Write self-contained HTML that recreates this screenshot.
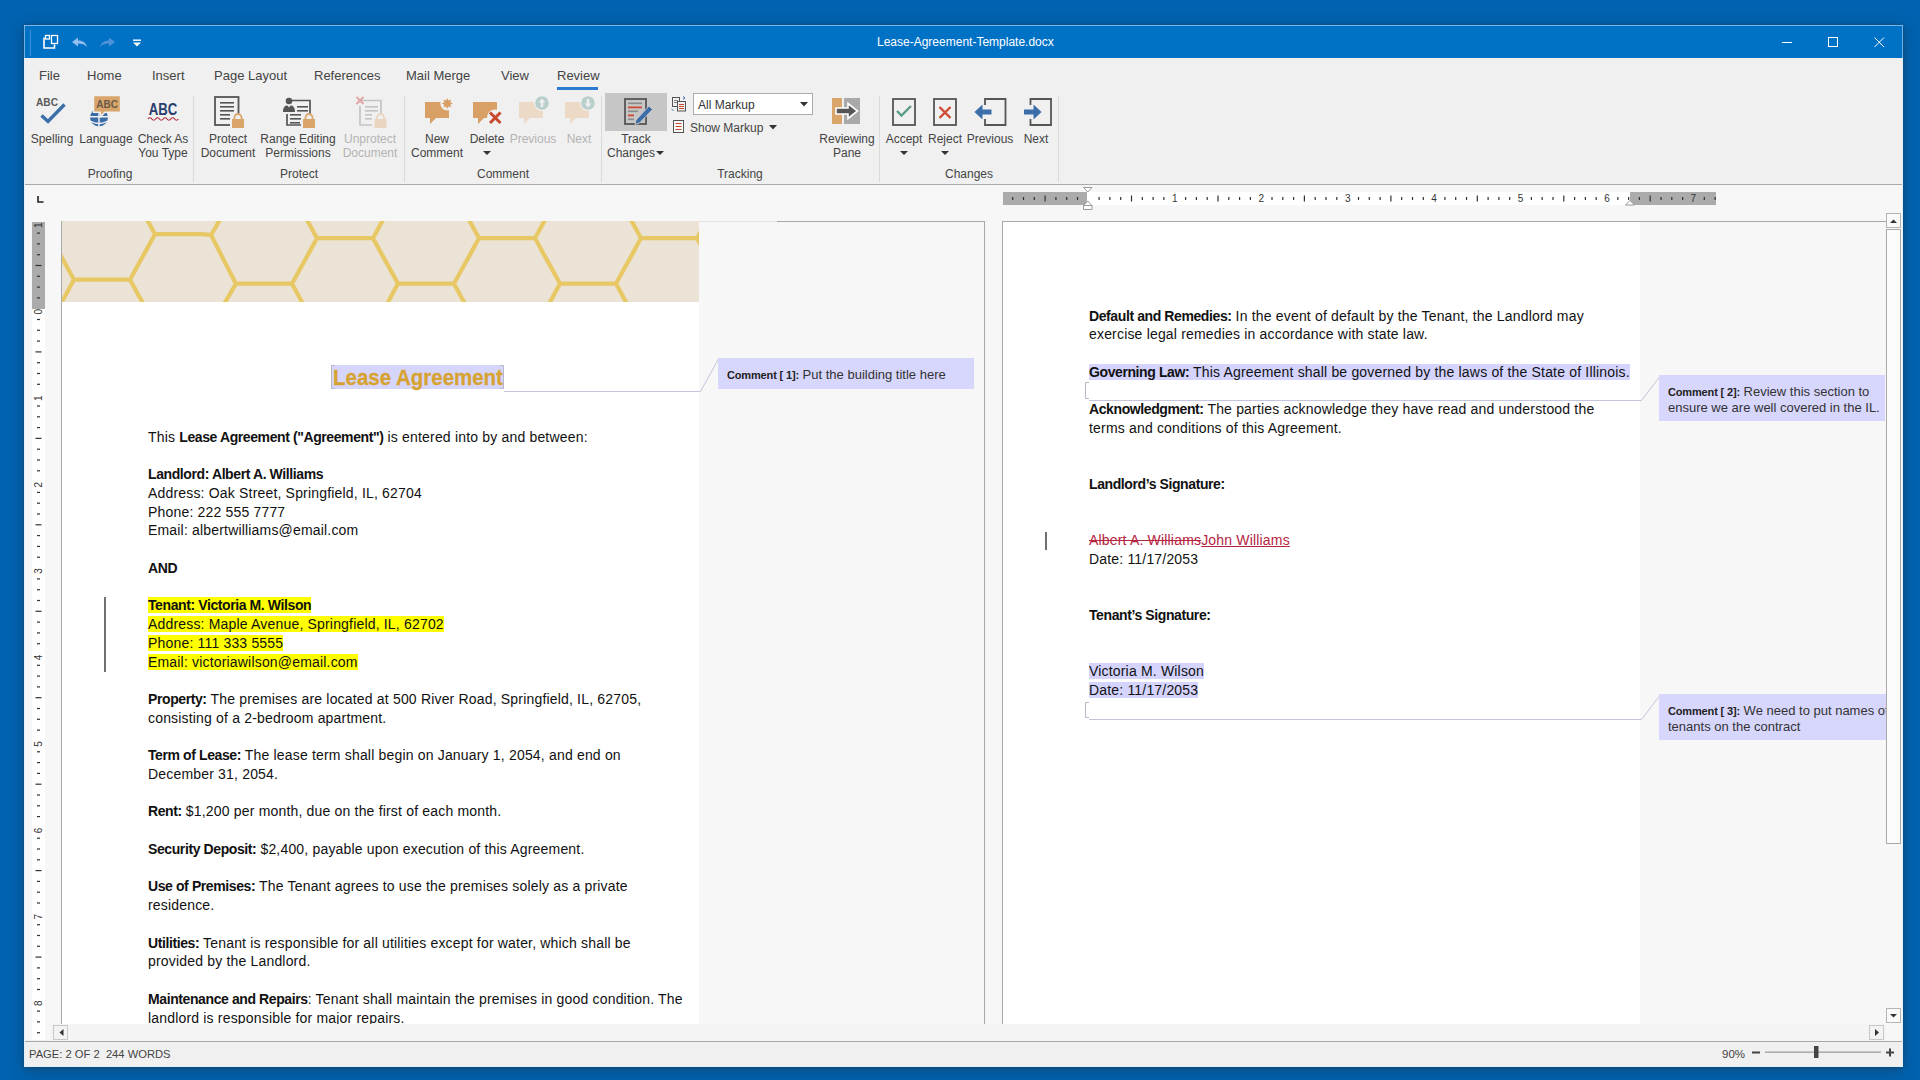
<!DOCTYPE html>
<html><head><meta charset="utf-8">
<style>
*{margin:0;padding:0;box-sizing:border-box}
html,body{width:1920px;height:1080px;overflow:hidden}
body{background:#0062b0;font-family:"Liberation Sans",sans-serif;position:relative}
.a{position:absolute}
.tab{position:absolute;top:68px;font-size:13px;color:#444;white-space:nowrap}
.rl{position:absolute;font-size:12px;color:#444;white-space:nowrap;text-align:center;line-height:14px}
.rl.dis{color:#b4b4b4}
.gl{position:absolute;top:167px;font-size:12px;color:#444;white-space:nowrap;text-align:center}
.sep{position:absolute;top:96px;width:1px;height:86px;background:#dadada}
.doc{position:absolute;font-size:14px;color:#111;line-height:19px;white-space:nowrap;letter-spacing:0.18px}
.doc b{letter-spacing:-0.4px}
.hl{background:#ffff00}
.sel{background:#d4d4fe}
.cm{position:absolute;background:#d7d6fd;font-size:13px;color:#333;line-height:16px}
.cm b{font-size:11px;font-weight:bold;color:#222;letter-spacing:-0.15px}
</style></head>
<body>
<!-- window frame -->
<div class="a" style="left:24px;top:25px;width:1879px;height:1042px;background:#f0f0f0;border:1px solid #e2eef8;border-top-color:#7db5e6;box-shadow:0 4px 14px rgba(40,40,40,0.35),0 0 3px rgba(50,50,50,0.45)"></div>
<!-- title bar -->
<div class="a" style="left:25px;top:26px;width:1877px;height:32px;background:#0072c6"></div>
<div class="a" style="left:24px;top:26px;width:1px;height:32px;background:#6fb0e6"></div>
<div class="a" style="left:1902px;top:26px;width:1px;height:32px;background:#6fb0e6"></div>
<div class="a" style="left:877px;top:35px;font-size:12px;color:#fff;white-space:nowrap">Lease-Agreement-Template.docx</div>

<!-- tabs -->
<div class="tab" style="left:39px">File</div>
<div class="tab" style="left:87px">Home</div>
<div class="tab" style="left:152px">Insert</div>
<div class="tab" style="left:214px">Page Layout</div>
<div class="tab" style="left:314px">References</div>
<div class="tab" style="left:406px">Mail Merge</div>
<div class="tab" style="left:501px">View</div>
<div class="tab" style="left:557px">Review</div>
<div class="a" style="left:557px;top:87px;width:41px;height:3px;background:#2b79d0"></div>


<!-- title icons -->
<svg class="a" style="left:0;top:0" width="1920" height="200" viewBox="0 0 1920 200">
 <g fill="none" stroke="#fff">
  <line x1="30.5" y1="30" x2="30.5" y2="56" stroke="#3d8fdc" stroke-width="1"/>
  <!-- quick access icon -->
  <path d="M44 37.5 V48 H54.5 V44.5" stroke-width="1.6"/>
  <rect x="45.5" y="35.5" width="4" height="3.5" stroke-width="1.3"/>
  <rect x="51.5" y="35.5" width="6" height="8" stroke-width="1.3"/>
 </g>
 <!-- undo -->
 <path d="M72 42 L78 37.5 V40.5 C83 40.5 86 43 87 47 C85 44.5 82 43.5 78 43.5 V46.5 Z" fill="#94bdf0"/>
 <!-- redo -->
 <path d="M115 42 L109 37.5 V40.5 C104 40.5 101 43 100 47 C102 44.5 105 43.5 109 43.5 V46.5 Z" fill="#4e93da"/>
 <!-- customize -->
 <rect x="133" y="39.5" width="8" height="1.4" fill="#fff"/>
 <path d="M133 42.5 H141 L137 46.5 Z" fill="#fff"/>
 <!-- window controls -->
 <g stroke="#fff" stroke-width="1" fill="none">
  <line x1="1782" y1="42.5" x2="1792" y2="42.5"/>
  <rect x="1828.5" y="37.5" width="9" height="9"/>
  <line x1="1874.5" y1="37.5" x2="1884" y2="47"/>
  <line x1="1884" y1="37.5" x2="1874.5" y2="47"/>
 </g>

 <!-- separators -->
 <g fill="#dadada">
  <rect x="193" y="96" width="1" height="86"/>
  <rect x="404" y="96" width="1" height="86"/>
  <rect x="601" y="96" width="1" height="86"/>
  <rect x="879" y="96" width="1" height="86"/>
  <rect x="1058" y="96" width="1" height="86"/>
 </g>

 <!-- Spelling -->
 <text x="36" y="106" font-family="Liberation Sans" font-weight="bold" font-size="11" fill="#595959" textLength="22" lengthAdjust="spacingAndGlyphs">ABC</text>
 <path d="M41.5 115.5 L48 121.5 L64.5 104.5" fill="none" stroke="#3b6ea8" stroke-width="3.4" stroke-linejoin="miter"/>

 <!-- Language -->
 <circle cx="99" cy="117.5" r="9" fill="#3b6ea8"/>
 <path d="M99 108 V127 M89 116.8 H109" stroke="#f0f0f0" stroke-width="1.5"/>
 <path d="M90 121 Q99 126 108 121" stroke="#f0f0f0" stroke-width="1.4" fill="none"/>
 <path d="M93.5 95.5 H120.5 V112.3 H104.8 L101 116.5 L100.2 112.3 H93.5 Z" fill="#d9a56b" stroke="#f0f0f0" stroke-width="1.4"/>
 <text x="96.3" y="107.8" font-family="Liberation Sans" font-weight="bold" font-size="10.8" fill="#6a5947" textLength="21.7" lengthAdjust="spacingAndGlyphs">ABC</text>
 <!-- Check as you type -->
 <text x="148.8" y="114.8" font-family="Liberation Sans" font-weight="bold" font-size="16.5" fill="#2b3d6c" textLength="28.5" lengthAdjust="spacingAndGlyphs">ABC</text>
 <path d="M148 119 q1.9 -2.5 3.8 0 t3.8 0 t3.8 0 t3.8 0 t3.8 0 t3.8 0 t3.8 0 t3.8 0" fill="none" stroke="#b02a3c" stroke-width="1.2"/>

 <!-- Protect document -->
 <rect x="215" y="97" width="23.5" height="28" fill="none" stroke="#555" stroke-width="1.8"/>
 <g fill="#555"><rect x="220" y="102" width="14" height="1.6"/><rect x="220" y="106" width="14" height="1.6"/><rect x="220" y="110" width="14" height="1.6"/><rect x="220" y="114" width="11" height="1.6"/><rect x="220" y="118" width="11" height="1.6"/></g>
 <rect x="230" y="114" width="14" height="14" fill="#f0f0f0"/>
 <path d="M234.5 119.5 V117.5 a3.5 3.5 0 0 1 7 0 V119.5" fill="none" stroke="#d9a56b" stroke-width="1.8"/>
 <rect x="232" y="119" width="12" height="9" fill="#d9a56b"/>

 <!-- Range editing permissions -->
 <circle cx="289" cy="101" r="3.3" fill="#555"/>
 <path d="M283 112 C283 107 285 105.5 287.5 105.5 L289 107.5 L290.5 105.5 C293 105.5 295 107 295 112 Z" fill="#555"/>
 <path d="M292 100.5 H310 V121" fill="none" stroke="#555" stroke-width="1.7"/>
 <path d="M287 114 V125 H301" fill="none" stroke="#555" stroke-width="1.7"/>
 <g fill="#555"><rect x="297" y="106" width="11" height="1.6"/><rect x="297" y="110" width="11" height="1.6"/><rect x="290" y="114" width="16" height="1.6"/><rect x="290" y="118" width="12" height="1.6"/><rect x="290" y="122" width="10" height="1.6"/></g>
 <rect x="301" y="114" width="14" height="14" fill="#f0f0f0"/>
 <path d="M305.5 119.5 V117.5 a3.5 3.5 0 0 1 7 0 V119.5" fill="none" stroke="#d9a56b" stroke-width="1.8"/>
 <rect x="303" y="119" width="12" height="9" fill="#d9a56b"/>

 <!-- Unprotect document (disabled) -->
 <path d="M360 100.5 H381 V121" fill="none" stroke="#c4c4c4" stroke-width="1.7"/>
 <path d="M360 106 V125 H373" fill="none" stroke="#c4c4c4" stroke-width="1.7"/>
 <g fill="#c4c4c4"><rect x="365" y="106" width="13" height="1.6"/><rect x="365" y="110" width="13" height="1.6"/><rect x="365" y="114" width="11" height="1.6"/><rect x="365" y="118" width="9" height="1.6"/></g>
 <path d="M356.5 97 L363.5 104 M363.5 97 L356.5 104" stroke="#e4a3a3" stroke-width="1.8"/>
 <rect x="372" y="114" width="14" height="14" fill="#f0f0f0"/>
 <path d="M377 119.5 V117.5 a3.5 3.5 0 0 1 7 0 V119.5" fill="none" stroke="#ead6c0" stroke-width="1.8"/>
 <rect x="374.5" y="119" width="12" height="9" fill="#ead6c0"/>

 <!-- New comment -->
 <path d="M425 102 H449 V118 H436 L430 124 V118 H425 Z" fill="#d9a065"/>
 <circle cx="447.3" cy="103.5" r="7" fill="#f0f0f0"/>
 <path d="M447.30,97.90 L448.52,100.54 L451.26,99.54 L450.26,102.28 L452.90,103.50 L450.26,104.72 L451.26,107.46 L448.52,106.46 L447.30,109.10 L446.08,106.46 L443.34,107.46 L444.34,104.72 L441.70,103.50 L444.34,102.28 L443.34,99.54 L446.08,100.54 Z" fill="#d9a065"/>

 <!-- Delete -->
 <path d="M473 102 H497 V118 H484 L478 124 V118 H473 Z" fill="#d9a065"/>
 <circle cx="495" cy="117.5" r="8" fill="#f0f0f0"/>
 <path d="M490 112.5 L500.5 123 M500.5 112.5 L490 123" stroke="#c9492e" stroke-width="3"/>

 <!-- Previous (disabled) -->
 <path d="M519 102 H543 V118 H530 L524 124 V118 H519 Z" fill="#ecdac6"/>
 <circle cx="542" cy="103" r="8" fill="#f0f0f0"/>
 <circle cx="542" cy="103" r="6.8" fill="#b9cfcb"/>
 <path d="M542 98.5 L545.5 102.5 H543.2 V107 H540.8 V102.5 H538.5 Z" fill="#f0f0f0"/>
 <!-- Next (disabled) -->
 <path d="M565 102 H589 V118 H576 L570 124 V118 H565 Z" fill="#ecdac6"/>
 <circle cx="588" cy="103" r="8" fill="#f0f0f0"/>
 <circle cx="588" cy="103" r="6.8" fill="#b9cfcb"/>
 <path d="M588 107.5 L591.5 103.5 H589.2 V99 H586.8 V103.5 H584.5 Z" fill="#f0f0f0"/>

 <!-- Track changes (pressed) -->
 <rect x="605" y="93" width="62" height="38" fill="#c6c6c6"/>
 <rect x="625" y="99" width="21" height="25" fill="#c6c6c6" stroke="#555" stroke-width="1.8"/>
 <g><rect x="628" y="102.5" width="14" height="1.6" fill="#8a8a8a"/><rect x="628" y="106.5" width="14" height="1.8" fill="#d04a34"/><rect x="628" y="110.5" width="10" height="1.6" fill="#8a8a8a"/><rect x="628" y="114.5" width="6" height="1.8" fill="#d04a34"/><rect x="628" y="118.5" width="6" height="1.6" fill="#8a8a8a"/></g>
 <path d="M636 120 L649 106 L652.5 109.5 L639.5 123 L635 124.5 Z" fill="#3b6ea8" stroke="#c6c6c6" stroke-width="1"/>

 <!-- compare small icon -->
 <g fill="none" stroke="#555" stroke-width="1">
  <rect x="672.5" y="97.5" width="7" height="9" fill="#f0f0f0"/>
  <rect x="677.5" y="101.5" width="8" height="9.5" fill="#f0f0f0"/>
 </g>
 <g fill="#c9492e"><rect x="679" y="104" width="5" height="1"/><rect x="679" y="106" width="5" height="1"/><rect x="679" y="108" width="5" height="1"/></g>
 <g fill="#888"><rect x="674" y="100" width="4" height="1"/><rect x="674" y="102" width="3" height="1"/></g>
 <path d="M683 96.5 l2 1.5 l-2 1.5 M671.5 109 l2 1.5" fill="none" stroke="#3b6ea8" stroke-width="1"/>
 <!-- combobox -->
 <rect x="693.5" y="93.5" width="119" height="21" fill="#fff" stroke="#ababab"/>
 <path d="M800 102 H808 L804 106.5 Z" fill="#333"/>
 <!-- show markup icon -->
 <rect x="673.5" y="120.5" width="10" height="12" fill="#f9f9f9" stroke="#555"/>
 <g fill="#c9492e"><rect x="675.5" y="123" width="6" height="1"/><rect x="675.5" y="126" width="6" height="1"/><rect x="675.5" y="129" width="6" height="1"/></g>
 <path d="M769 125 H777 L773 129.5 Z" fill="#333"/>

 <!-- Reviewing pane -->
 <rect x="832" y="98" width="10" height="26" fill="#d9a56b"/>
 <rect x="844" y="98" width="16" height="26" fill="#a9a9a9"/>
 <path d="M836 108 H848 V103.5 L857.5 111 L848 118.5 V114 H836 Z" fill="#555" stroke="#fff" stroke-width="1.6" stroke-linejoin="miter"/>

 <!-- Accept -->
 <rect x="893" y="99" width="22" height="26" fill="none" stroke="#555" stroke-width="1.8"/>
 <path d="M897 111 L901.5 115.5 L911 106" fill="none" stroke="#5e9c84" stroke-width="2.4"/>
 <!-- Reject -->
 <rect x="934" y="99" width="22" height="26" fill="none" stroke="#555" stroke-width="1.8"/>
 <path d="M939.5 107 L950.5 118 M950.5 107 L939.5 118" stroke="#cf4a33" stroke-width="2.4"/>
 <!-- Previous -->
 <path d="M985 105 V99 H1005.5 V125 H985 V119" fill="none" stroke="#555" stroke-width="1.8"/>
 <path d="M974.5 112 L982.5 104.5 V109.5 H991.5 V114.5 H982.5 V119.5 Z" fill="#3b6ea8"/>
 <!-- Next -->
 <path d="M1030.5 105 V99 H1051 V125 H1030.5 V119" fill="none" stroke="#555" stroke-width="1.8"/>
 <path d="M1041.5 112 L1033.5 104.5 V109.5 H1024 V114.5 H1033.5 V119.5 Z" fill="#3b6ea8"/>
 <!-- dropdown arrows -->
 <g fill="#333">
  <path d="M483 151 H491 L487 155 Z"/>
  <path d="M656 151 H664 L660 155 Z"/>
  <path d="M900 151 H908 L904 155 Z"/>
  <path d="M941 151 H949 L945 155 Z"/>
 </g>
</svg>

<!-- ribbon labels -->
<div class="rl" style="left:22px;top:132px;width:60px">Spelling</div>
<div class="rl" style="left:76px;top:132px;width:60px">Language</div>
<div class="rl" style="left:128px;top:132px;width:70px">Check As<br>You Type</div>
<div class="gl" style="left:60px;width:100px">Proofing</div>
<div class="rl" style="left:193px;top:132px;width:70px">Protect<br>Document</div>
<div class="rl" style="left:253px;top:132px;width:90px">Range Editing<br>Permissions</div>
<div class="rl dis" style="left:330px;top:132px;width:80px">Unprotect<br>Document</div>
<div class="gl" style="left:249px;width:100px">Protect</div>
<div class="rl" style="left:402px;top:132px;width:70px">New<br>Comment</div>
<div class="rl" style="left:457px;top:132px;width:60px">Delete</div>
<div class="rl dis" style="left:503px;top:132px;width:60px">Previous</div>
<div class="rl dis" style="left:549px;top:132px;width:60px">Next</div>
<div class="gl" style="left:453px;width:100px">Comment</div>
<div class="rl" style="left:601px;top:132px;width:70px">Track<br><span style="margin-right:10px">Changes</span></div>
<div class="a" style="left:698px;top:98px;font-size:12px;color:#333;white-space:nowrap">All Markup</div>
<div class="a" style="left:690px;top:121px;font-size:12px;color:#444;white-space:nowrap">Show Markup</div>
<div class="gl" style="left:690px;width:100px">Tracking</div>
<div class="rl" style="left:807px;top:132px;width:80px">Reviewing<br>Pane</div>
<div class="rl" style="left:874px;top:132px;width:60px">Accept</div>
<div class="rl" style="left:915px;top:132px;width:60px">Reject</div>
<div class="rl" style="left:955px;top:132px;width:70px">Previous</div>
<div class="rl" style="left:1006px;top:132px;width:60px">Next</div>
<div class="gl" style="left:919px;width:100px">Changes</div>

<div class="a" style="left:25px;top:184px;width:1877px;height:1px;background:#a9a9a9"></div>
<div class="a" style="left:25px;top:185px;width:1877px;height:855px;background:#f7f7f7"></div>
<div class="a" style="left:61px;top:221px;width:924px;height:820px;border:1px solid #a8a8a8;border-bottom:none;background:#f7f7f7"></div>
<div class="a" style="left:62px;top:222px;width:637px;height:802px;background:#fff"></div>
<div class="a" style="left:699px;top:221px;width:78px;height:1px;background:#e4e4e4"></div>
<div class="a" style="left:1002px;top:221px;width:900px;height:820px;border:1px solid #a8a8a8;border-bottom:none;border-right:none;background:#f7f7f7"></div>
<div class="a" style="left:1003px;top:222px;width:637px;height:802px;background:#fff"></div>
<svg class="a" style="left:0;top:0" width="1920" height="400"><defs><clipPath id="hc"><rect x="62" y="221" width="637" height="81"/></clipPath></defs><rect x="62" y="221" width="637" height="81" fill="#ebe3d5"/><path clip-path="url(#hc)" d="M-250.0,279.7 L-240.7,279.7 L-231.3,279.7 L-222.0,279.7 L-212.7,279.7 L-203.3,279.7 L-194.0,279.7 M-194.0,279.7 L-189.8,272.1 L-185.7,264.5 L-181.5,256.9 L-177.3,249.4 L-173.2,241.8 L-169.0,234.2 M-194.0,279.7 L-189.8,287.3 L-185.7,294.9 L-181.5,302.4 L-177.3,310.0 L-173.2,317.6 L-169.0,325.2 M-169.0,234.2 L-159.7,234.2 L-150.3,234.2 L-141.0,234.2 L-131.7,234.2 L-122.3,234.2 L-113.0,234.2 M-113.0,234.2 L-108.8,241.8 L-104.7,249.4 L-100.5,256.9 L-96.3,264.5 L-92.2,272.1 L-88.0,279.7 M-113.0,234.2 L-108.8,226.6 L-104.7,219.0 L-100.5,211.4 L-96.3,203.9 L-92.2,196.3 L-88.0,188.7 M-169.0,234.2 L-173.2,226.6 L-177.3,219.0 L-181.5,211.4 L-185.7,203.9 L-189.8,196.3 L-194.0,188.7 M-250.0,279.7 L-254.2,287.3 L-258.3,294.9 L-262.5,302.4 L-266.7,310.0 L-270.8,317.6 L-275.0,325.2 M-88.0,279.7 L-78.7,279.7 L-69.3,279.7 L-60.0,279.7 L-50.7,279.7 L-41.3,279.7 L-32.0,279.7 M-32.0,279.7 L-27.8,272.1 L-23.7,264.5 L-19.5,256.9 L-15.3,249.4 L-11.2,241.8 L-7.0,234.2 M-32.0,279.7 L-27.8,287.3 L-23.7,294.9 L-19.5,302.4 L-15.3,310.0 L-11.2,317.6 L-7.0,325.2 M-7.0,234.2 L2.3,234.2 L11.7,234.2 L21.0,234.2 L30.3,234.2 L39.7,234.2 L49.0,234.2 M49.0,234.2 L53.2,241.8 L57.3,249.4 L61.5,256.9 L65.7,264.5 L69.8,272.1 L74.0,279.7 M49.0,234.2 L53.2,226.6 L57.3,219.0 L61.5,211.4 L65.7,203.9 L69.8,196.3 L74.0,188.7 M-7.0,234.2 L-11.2,226.6 L-15.3,219.0 L-19.5,211.4 L-23.7,203.9 L-27.8,196.3 L-32.0,188.7 M-88.0,279.7 L-92.2,287.3 L-96.3,294.9 L-100.5,302.4 L-104.7,310.0 L-108.8,317.6 L-113.0,325.2 M74.0,279.7 L83.3,279.7 L92.7,279.7 L102.0,279.7 L111.3,279.7 L120.7,279.7 L130.0,279.7 M130.0,279.7 L134.2,272.1 L138.3,264.5 L142.5,256.9 L146.7,249.4 L150.8,241.8 L155.0,234.2 M130.0,279.7 L134.2,287.3 L138.3,294.9 L142.5,302.4 L146.7,310.0 L150.8,317.6 L155.0,325.2 M155.0,234.2 L164.3,234.2 L173.7,234.2 L183.0,234.2 L192.3,234.2 L201.7,234.2 L211.0,235.0 M211.0,235.0 L215.2,243.1 L219.3,251.3 L223.5,259.4 L227.7,267.6 L231.8,275.7 L236.0,283.7 M211.0,235.0 L215.2,228.0 L219.3,220.9 L223.5,213.9 L227.7,206.9 L231.8,199.9 L236.0,192.7 M155.0,234.2 L150.8,226.6 L146.7,219.0 L142.5,211.4 L138.3,203.9 L134.2,196.3 L130.0,188.7 M74.0,279.7 L69.8,287.3 L65.7,294.9 L61.5,302.4 L57.3,310.0 L53.2,317.6 L49.0,325.2 M236.0,283.7 L245.3,283.7 L254.7,283.7 L264.0,283.7 L273.3,283.7 L282.7,283.7 L292.0,283.7 M292.0,283.7 L296.2,276.1 L300.3,268.5 L304.5,260.9 L308.7,253.4 L312.8,245.8 L317.0,238.2 M292.0,283.7 L296.2,291.3 L300.3,298.9 L304.5,306.4 L308.7,314.0 L312.8,321.6 L317.0,329.2 M317.0,238.2 L326.3,238.2 L335.7,238.2 L345.0,238.2 L354.3,238.2 L363.7,238.2 L373.0,238.2 M373.0,238.2 L377.2,245.8 L381.3,253.4 L385.5,260.9 L389.7,268.5 L393.8,276.1 L398.0,283.7 M373.0,238.2 L377.2,230.6 L381.3,223.0 L385.5,215.4 L389.7,207.9 L393.8,200.3 L398.0,192.7 M317.0,238.2 L312.8,230.6 L308.7,223.0 L304.5,215.4 L300.3,207.9 L296.2,200.3 L292.0,192.7 M236.0,283.7 L231.8,290.9 L227.7,297.9 L223.5,304.9 L219.3,311.9 L215.2,319.0 L211.0,326.0 M398.0,283.7 L407.3,283.7 L416.7,283.7 L426.0,283.7 L435.3,283.7 L444.7,283.7 L454.0,283.7 M454.0,283.7 L458.2,276.1 L462.3,268.5 L466.5,260.9 L470.7,253.4 L474.8,245.8 L479.0,238.2 M454.0,283.7 L458.2,291.3 L462.3,298.9 L466.5,306.4 L470.7,314.0 L474.8,321.6 L479.0,329.2 M479.0,238.2 L488.3,238.2 L497.7,238.2 L507.0,238.2 L516.3,238.2 L525.7,238.2 L535.0,238.2 M535.0,238.2 L539.2,245.8 L543.3,253.4 L547.5,260.9 L551.7,268.5 L555.8,276.1 L560.0,283.7 M535.0,238.2 L539.2,230.6 L543.3,223.0 L547.5,215.4 L551.7,207.9 L555.8,200.3 L560.0,192.7 M479.0,238.2 L474.8,230.6 L470.7,223.0 L466.5,215.4 L462.3,207.9 L458.2,200.3 L454.0,192.7 M398.0,283.7 L393.8,291.3 L389.7,298.9 L385.5,306.4 L381.3,314.0 L377.2,321.6 L373.0,329.2 M560.0,283.7 L569.3,283.7 L578.7,283.7 L588.0,283.7 L597.3,283.7 L606.7,283.7 L616.0,283.7 M616.0,283.7 L620.2,276.1 L624.3,268.5 L628.5,260.9 L632.7,253.4 L636.8,245.8 L641.0,238.2 M616.0,283.7 L620.2,291.3 L624.3,298.9 L628.5,306.4 L632.7,314.0 L636.8,321.6 L641.0,329.2 M641.0,238.2 L650.3,238.2 L659.7,238.2 L669.0,238.2 L678.3,238.2 L687.7,238.2 L697.0,238.2 M697.0,238.2 L701.2,245.8 L705.3,253.4 L709.5,260.9 L713.7,268.5 L717.8,276.1 L722.0,283.7 M697.0,238.2 L701.2,230.6 L705.3,223.0 L709.5,215.4 L713.7,207.9 L717.8,200.3 L722.0,192.7 M641.0,238.2 L636.8,230.6 L632.7,223.0 L628.5,215.4 L624.3,207.9 L620.2,200.3 L616.0,192.7 M560.0,283.7 L555.8,291.3 L551.7,298.9 L547.5,306.4 L543.3,314.0 L539.2,321.6 L535.0,329.2 M722.0,283.7 L731.3,283.7 L740.7,283.7 L750.0,283.7 L759.3,283.7 L768.7,283.7 L778.0,283.7 M778.0,283.7 L782.2,276.1 L786.3,268.5 L790.5,260.9 L794.7,253.4 L798.8,245.8 L803.0,238.2 M778.0,283.7 L782.2,291.3 L786.3,298.9 L790.5,306.4 L794.7,314.0 L798.8,321.6 L803.0,329.2 M803.0,238.2 L812.3,238.2 L821.7,238.2 L831.0,238.2 L840.3,238.2 L849.7,238.2 L859.0,238.2 M859.0,238.2 L863.2,245.8 L867.3,253.4 L871.5,260.9 L875.7,268.5 L879.8,276.1 L884.0,283.7 M859.0,238.2 L863.2,230.6 L867.3,223.0 L871.5,215.4 L875.7,207.9 L879.8,200.3 L884.0,192.7 M803.0,238.2 L798.8,230.6 L794.7,223.0 L790.5,215.4 L786.3,207.9 L782.2,200.3 L778.0,192.7 M722.0,283.7 L717.8,291.3 L713.7,298.9 L709.5,306.4 L705.3,314.0 L701.2,321.6 L697.0,329.2 M884.0,283.7 L893.3,283.7 L902.7,283.7 L912.0,283.7 L921.3,283.7 L930.7,283.7 L940.0,283.7 M940.0,283.7 L944.2,276.1 L948.3,268.5 L952.5,260.9 L956.7,253.4 L960.8,245.8 L965.0,238.2 M940.0,283.7 L944.2,291.3 L948.3,298.9 L952.5,306.4 L956.7,314.0 L960.8,321.6 L965.0,329.2 M965.0,238.2 L974.3,238.2 L983.7,238.2 L993.0,238.2 L1002.3,238.2 L1011.7,238.2 L1021.0,238.2 M1021.0,238.2 L1025.2,245.8 L1029.3,253.4 L1033.5,260.9 L1037.7,268.5 L1041.8,276.1 L1046.0,283.7 M1021.0,238.2 L1025.2,230.6 L1029.3,223.0 L1033.5,215.4 L1037.7,207.9 L1041.8,200.3 L1046.0,192.7 M965.0,238.2 L960.8,230.6 L956.7,223.0 L952.5,215.4 L948.3,207.9 L944.2,200.3 L940.0,192.7 M884.0,283.7 L879.8,291.3 L875.7,298.9 L871.5,306.4 L867.3,314.0 L863.2,321.6 L859.0,329.2" stroke="#e8c765" stroke-width="4.2" fill="none" stroke-linejoin="round"/></svg>
<svg class="a" style="left:0;top:0" width="1920" height="1080"><rect x="1003" y="192" width="84" height="13" fill="#ababab"/><rect x="1087" y="192" width="543" height="13" fill="#fff"/><rect x="1630" y="192" width="86" height="13" fill="#ababab"/><rect x="1012.1" y="197" width="1.2" height="3" fill="#333"/><rect x="1022.9" y="197" width="1.2" height="3" fill="#333"/><rect x="1033.7" y="197" width="1.2" height="3" fill="#333"/><rect x="1044.5" y="195.5" width="1.2" height="6" fill="#333"/><rect x="1055.3" y="197" width="1.2" height="3" fill="#333"/><rect x="1066.1" y="197" width="1.2" height="3" fill="#333"/><rect x="1076.9" y="197" width="1.2" height="3" fill="#333"/><rect x="1098.5" y="197" width="1.2" height="3" fill="#333"/><rect x="1109.3" y="197" width="1.2" height="3" fill="#333"/><rect x="1120.1" y="197" width="1.2" height="3" fill="#333"/><rect x="1130.9" y="195.5" width="1.2" height="6" fill="#333"/><rect x="1141.7" y="197" width="1.2" height="3" fill="#333"/><rect x="1152.5" y="197" width="1.2" height="3" fill="#333"/><rect x="1163.3" y="197" width="1.2" height="3" fill="#333"/><text x="1174.8" y="202" font-family="Liberation Sans" font-size="10" fill="#333" text-anchor="middle">1</text><rect x="1185.0" y="197" width="1.2" height="3" fill="#333"/><rect x="1195.8" y="197" width="1.2" height="3" fill="#333"/><rect x="1206.6" y="197" width="1.2" height="3" fill="#333"/><rect x="1217.4" y="195.5" width="1.2" height="6" fill="#333"/><rect x="1228.2" y="197" width="1.2" height="3" fill="#333"/><rect x="1239.0" y="197" width="1.2" height="3" fill="#333"/><rect x="1249.8" y="197" width="1.2" height="3" fill="#333"/><text x="1261.2" y="202" font-family="Liberation Sans" font-size="10" fill="#333" text-anchor="middle">2</text><rect x="1271.4" y="197" width="1.2" height="3" fill="#333"/><rect x="1282.2" y="197" width="1.2" height="3" fill="#333"/><rect x="1293.0" y="197" width="1.2" height="3" fill="#333"/><rect x="1303.8" y="195.5" width="1.2" height="6" fill="#333"/><rect x="1314.6" y="197" width="1.2" height="3" fill="#333"/><rect x="1325.4" y="197" width="1.2" height="3" fill="#333"/><rect x="1336.2" y="197" width="1.2" height="3" fill="#333"/><text x="1347.7" y="202" font-family="Liberation Sans" font-size="10" fill="#333" text-anchor="middle">3</text><rect x="1357.9" y="197" width="1.2" height="3" fill="#333"/><rect x="1368.7" y="197" width="1.2" height="3" fill="#333"/><rect x="1379.5" y="197" width="1.2" height="3" fill="#333"/><rect x="1390.3" y="195.5" width="1.2" height="6" fill="#333"/><rect x="1401.1" y="197" width="1.2" height="3" fill="#333"/><rect x="1411.9" y="197" width="1.2" height="3" fill="#333"/><rect x="1422.7" y="197" width="1.2" height="3" fill="#333"/><text x="1434.1" y="202" font-family="Liberation Sans" font-size="10" fill="#333" text-anchor="middle">4</text><rect x="1444.3" y="197" width="1.2" height="3" fill="#333"/><rect x="1455.1" y="197" width="1.2" height="3" fill="#333"/><rect x="1465.9" y="197" width="1.2" height="3" fill="#333"/><rect x="1476.7" y="195.5" width="1.2" height="6" fill="#333"/><rect x="1487.5" y="197" width="1.2" height="3" fill="#333"/><rect x="1498.3" y="197" width="1.2" height="3" fill="#333"/><rect x="1509.1" y="197" width="1.2" height="3" fill="#333"/><text x="1520.5" y="202" font-family="Liberation Sans" font-size="10" fill="#333" text-anchor="middle">5</text><rect x="1530.8" y="197" width="1.2" height="3" fill="#333"/><rect x="1541.6" y="197" width="1.2" height="3" fill="#333"/><rect x="1552.4" y="197" width="1.2" height="3" fill="#333"/><rect x="1563.2" y="195.5" width="1.2" height="6" fill="#333"/><rect x="1574.0" y="197" width="1.2" height="3" fill="#333"/><rect x="1584.8" y="197" width="1.2" height="3" fill="#333"/><rect x="1595.6" y="197" width="1.2" height="3" fill="#333"/><text x="1607.0" y="202" font-family="Liberation Sans" font-size="10" fill="#333" text-anchor="middle">6</text><rect x="1617.2" y="197" width="1.2" height="3" fill="#333"/><rect x="1628.0" y="197" width="1.2" height="3" fill="#333"/><rect x="1638.8" y="197" width="1.2" height="3" fill="#333"/><rect x="1649.6" y="195.5" width="1.2" height="6" fill="#333"/><rect x="1660.4" y="197" width="1.2" height="3" fill="#333"/><rect x="1671.2" y="197" width="1.2" height="3" fill="#333"/><rect x="1682.0" y="197" width="1.2" height="3" fill="#333"/><text x="1693.4" y="202" font-family="Liberation Sans" font-size="10" fill="#333" text-anchor="middle">7</text><rect x="1703.7" y="197" width="1.2" height="3" fill="#333"/><rect x="1714.5" y="197" width="1.2" height="3" fill="#333"/><path d="M1083.5 187.5 H1092 L1087.75 192 Z" fill="#fff" stroke="#999" stroke-width="1"/><path d="M1087.75 201 L1092 205.5 V209.5 H1083.5 V205.5 Z" fill="#fff" stroke="#999" stroke-width="1"/><path d="M1083.5 205.5 H1092" stroke="#999" stroke-width="1"/><path d="M1630 200.5 L1634.5 205 H1625.5 Z" fill="#fff" stroke="#999" stroke-width="1"/><rect x="32" y="222" width="13" height="87" fill="#ababab"/><rect x="32" y="309" width="13" height="731" fill="#fff"/><text x="0" y="0" font-family="Liberation Sans" font-size="10" fill="#333" text-anchor="middle" transform="translate(42 225.2) rotate(-90)">1</text><rect x="37" y="232.5" width="3" height="1.2" fill="#333"/><rect x="37" y="243.3" width="3" height="1.2" fill="#333"/><rect x="37" y="254.1" width="3" height="1.2" fill="#333"/><rect x="35.5" y="264.9" width="6" height="1.2" fill="#333"/><rect x="37" y="275.7" width="3" height="1.2" fill="#333"/><rect x="37" y="286.5" width="3" height="1.2" fill="#333"/><rect x="37" y="297.3" width="3" height="1.2" fill="#333"/><text x="0" y="0" font-family="Liberation Sans" font-size="10" fill="#333" text-anchor="middle" transform="translate(42 311.7) rotate(-90)">0</text><rect x="37" y="318.9" width="3" height="1.2" fill="#333"/><rect x="37" y="329.7" width="3" height="1.2" fill="#333"/><rect x="37" y="340.5" width="3" height="1.2" fill="#333"/><rect x="35.5" y="351.3" width="6" height="1.2" fill="#333"/><rect x="37" y="362.1" width="3" height="1.2" fill="#333"/><rect x="37" y="372.9" width="3" height="1.2" fill="#333"/><rect x="37" y="383.7" width="3" height="1.2" fill="#333"/><text x="0" y="0" font-family="Liberation Sans" font-size="10" fill="#333" text-anchor="middle" transform="translate(42 398.1) rotate(-90)">1</text><rect x="37" y="405.4" width="3" height="1.2" fill="#333"/><rect x="37" y="416.2" width="3" height="1.2" fill="#333"/><rect x="37" y="427.0" width="3" height="1.2" fill="#333"/><rect x="35.5" y="437.8" width="6" height="1.2" fill="#333"/><rect x="37" y="448.6" width="3" height="1.2" fill="#333"/><rect x="37" y="459.4" width="3" height="1.2" fill="#333"/><rect x="37" y="470.2" width="3" height="1.2" fill="#333"/><text x="0" y="0" font-family="Liberation Sans" font-size="10" fill="#333" text-anchor="middle" transform="translate(42 484.6) rotate(-90)">2</text><rect x="37" y="491.8" width="3" height="1.2" fill="#333"/><rect x="37" y="502.6" width="3" height="1.2" fill="#333"/><rect x="37" y="513.4" width="3" height="1.2" fill="#333"/><rect x="35.5" y="524.2" width="6" height="1.2" fill="#333"/><rect x="37" y="535.0" width="3" height="1.2" fill="#333"/><rect x="37" y="545.8" width="3" height="1.2" fill="#333"/><rect x="37" y="556.6" width="3" height="1.2" fill="#333"/><text x="0" y="0" font-family="Liberation Sans" font-size="10" fill="#333" text-anchor="middle" transform="translate(42 571.0) rotate(-90)">3</text><rect x="37" y="578.3" width="3" height="1.2" fill="#333"/><rect x="37" y="589.1" width="3" height="1.2" fill="#333"/><rect x="37" y="599.9" width="3" height="1.2" fill="#333"/><rect x="35.5" y="610.7" width="6" height="1.2" fill="#333"/><rect x="37" y="621.5" width="3" height="1.2" fill="#333"/><rect x="37" y="632.3" width="3" height="1.2" fill="#333"/><rect x="37" y="643.1" width="3" height="1.2" fill="#333"/><text x="0" y="0" font-family="Liberation Sans" font-size="10" fill="#333" text-anchor="middle" transform="translate(42 657.5) rotate(-90)">4</text><rect x="37" y="664.7" width="3" height="1.2" fill="#333"/><rect x="37" y="675.5" width="3" height="1.2" fill="#333"/><rect x="37" y="686.3" width="3" height="1.2" fill="#333"/><rect x="35.5" y="697.1" width="6" height="1.2" fill="#333"/><rect x="37" y="707.9" width="3" height="1.2" fill="#333"/><rect x="37" y="718.7" width="3" height="1.2" fill="#333"/><rect x="37" y="729.5" width="3" height="1.2" fill="#333"/><text x="0" y="0" font-family="Liberation Sans" font-size="10" fill="#333" text-anchor="middle" transform="translate(42 744.0) rotate(-90)">5</text><rect x="37" y="751.2" width="3" height="1.2" fill="#333"/><rect x="37" y="762.0" width="3" height="1.2" fill="#333"/><rect x="37" y="772.8" width="3" height="1.2" fill="#333"/><rect x="35.5" y="783.6" width="6" height="1.2" fill="#333"/><rect x="37" y="794.4" width="3" height="1.2" fill="#333"/><rect x="37" y="805.2" width="3" height="1.2" fill="#333"/><rect x="37" y="816.0" width="3" height="1.2" fill="#333"/><text x="0" y="0" font-family="Liberation Sans" font-size="10" fill="#333" text-anchor="middle" transform="translate(42 830.4) rotate(-90)">6</text><rect x="37" y="837.6" width="3" height="1.2" fill="#333"/><rect x="37" y="848.4" width="3" height="1.2" fill="#333"/><rect x="37" y="859.2" width="3" height="1.2" fill="#333"/><rect x="35.5" y="870.0" width="6" height="1.2" fill="#333"/><rect x="37" y="880.8" width="3" height="1.2" fill="#333"/><rect x="37" y="891.6" width="3" height="1.2" fill="#333"/><rect x="37" y="902.4" width="3" height="1.2" fill="#333"/><text x="0" y="0" font-family="Liberation Sans" font-size="10" fill="#333" text-anchor="middle" transform="translate(42 916.8) rotate(-90)">7</text><rect x="37" y="924.1" width="3" height="1.2" fill="#333"/><rect x="37" y="934.9" width="3" height="1.2" fill="#333"/><rect x="37" y="945.7" width="3" height="1.2" fill="#333"/><rect x="35.5" y="956.5" width="6" height="1.2" fill="#333"/><rect x="37" y="967.3" width="3" height="1.2" fill="#333"/><rect x="37" y="978.1" width="3" height="1.2" fill="#333"/><rect x="37" y="988.9" width="3" height="1.2" fill="#333"/><text x="0" y="0" font-family="Liberation Sans" font-size="10" fill="#333" text-anchor="middle" transform="translate(42 1003.3) rotate(-90)">8</text><rect x="37" y="1010.5" width="3" height="1.2" fill="#333"/><rect x="37" y="1021.3" width="3" height="1.2" fill="#333"/><rect x="37" y="1032.1" width="3" height="1.2" fill="#333"/><path d="M38 196 V202 H43.5" fill="none" stroke="#222" stroke-width="1.6"/></svg>
<div class="a" style="left:62px;top:222px;width:637px;height:802px;overflow:hidden">
<div class="doc" style="left:86px;top:205.77px;line-height:18.73px;">This <b>Lease Agreement ("Agreement")</b> is entered into by and between:<br>&#8203;<br><b>Landlord: Albert A. Williams</b><br>Address: Oak Street, Springfield, IL, 62704<br>Phone: 222 555 7777<br>Email: albertwilliams@email.com<br>&#8203;<br><b>AND</b><br>&#8203;<br><span class="hl"><b>Tenant: Victoria M. Wilson</b></span><br><span class="hl">Address: Maple Avenue, Springfield, IL, 62702</span><br><span class="hl">Phone: 111 333 5555</span><br><span class="hl">Email: victoriawilson@email.com</span><br>&#8203;<br><b>Property:</b> The premises are located at 500 River Road, Springfield, IL, 62705,<br>consisting of a 2-bedroom apartment.<br>&#8203;<br><b>Term of Lease:</b> The lease term shall begin on January 1, 2054, and end on<br>December 31, 2054.<br>&#8203;<br><b>Rent:</b> $1,200 per month, due on the first of each month.<br>&#8203;<br><b>Security Deposit:</b> $2,400, payable upon execution of this Agreement.<br>&#8203;<br><b>Use of Premises:</b> The Tenant agrees to use the premises solely as a private<br>residence.<br>&#8203;<br><b>Utilities:</b> Tenant is responsible for all utilities except for water, which shall be<br>provided by the Landlord.<br>&#8203;<br><b>Maintenance and Repairs</b>: Tenant shall maintain the premises in good condition. The<br>landlord is responsible for major repairs.</div>
</div>
<div class="a" style="left:331px;top:365px;width:173px;height:24px;background:#d6d6fd"></div>
<div class="a" style="left:333px;top:365px;font-size:22.5px;line-height:normal;font-weight:bold;color:#d6a331;white-space:nowrap;transform:scaleX(0.91);transform-origin:0 0;-webkit-text-stroke:0.3px #d6a331">Lease Agreement</div>
<div class="a" style="left:104px;top:597px;width:2px;height:75px;background:#707070"></div>
<div class="doc" style="left:1089px;top:306.77px;line-height:18.68px;"><b>Default and Remedies:</b> In the event of default by the Tenant, the Landlord may<br>exercise legal remedies in accordance with state law.<br>&#8203;<br><span class="sel"><b>Governing Law:</b> This Agreement shall be governed by the laws of the State of Illinois.</span><br>&#8203;<br><b>Acknowledgment:</b> The parties acknowledge they have read and understood the<br>terms and conditions of this Agreement.<br>&#8203;<br>&#8203;<br><b>Landlord’s Signature:</b><br>&#8203;<br>&#8203;<br><span style="color:#b5243f;text-decoration:line-through">Albert A. Williams</span><span style="color:#b5243f;text-decoration:underline">John Williams</span><br>Date: 11/17/2053<br>&#8203;<br>&#8203;<br><b>Tenant’s Signature:</b><br>&#8203;<br>&#8203;<br><span class="sel">Victoria M. Wilson</span><br><span class="sel">Date: 11/17/2053</span></div>
<div class="a" style="left:1045px;top:532px;width:2px;height:18px;background:#707070"></div>
<svg class="a" style="left:0;top:0" width="1920" height="1080"><g fill="none" stroke="#b8b8c8" stroke-width="1"><path d="M1089 382.5 H1085.5 V398.5 H1089"/><path d="M1089 702.5 H1085.5 V717.5 H1089"/><path d="M335 365.5 H331.5 V388.5 H335"/><path d="M500 365.5 H503.5 V388.5 H500"/></g></svg>
<svg class="a" style="left:0;top:0" width="1920" height="1080"><g fill="none" stroke="#c4c4dc" stroke-width="1"><path d="M504 391.5 H700.5 L718.5 359"/><path d="M1089 400.5 H1641.5 L1659.5 377"/><path d="M1089 719.5 H1641.5 L1659.5 696"/></g></svg>
<div class="cm" style="left:718px;top:358px;width:256px;height:31px;padding:8.5px 0 0 9px;white-space:nowrap"><b>Comment [ 1]:</b> Put the building title here</div>
<div class="a" style="left:1640px;top:222px;width:246px;height:802px;overflow:hidden">
<div class="cm" style="left:19px;top:153px;width:226px;height:46px;padding:8.5px 0 0 9px;white-space:nowrap"><b>Comment [ 2]:</b> Review this section to<br>ensure we are well covered in the IL.</div>
<div class="cm" style="left:19px;top:472px;width:240px;height:46px;padding:8.5px 0 0 9px;white-space:nowrap"><b>Comment [ 3]:</b> We need to put names of<br>tenants on the contract</div>
</div>
<div class="a" style="left:1886px;top:221px;width:1px;height:803px;background:#c8c8c8"></div>
<div class="a" style="left:1886px;top:185px;width:16px;height:855px;background:#f7f7f7"></div>
<div class="a" style="left:1886px;top:213px;width:15px;height:15px;border:1px solid #b4b4b4;background:#fafafa"></div>
<div class="a" style="left:1886px;top:229px;width:15px;height:615px;border:1px solid #a9a9a9;background:#fcfcfc"></div>
<div class="a" style="left:1886px;top:1008px;width:15px;height:15px;border:1px solid #b4b4b4;background:#fafafa"></div>
<div class="a" style="left:50px;top:1024px;width:1836px;height:17px;background:#f4f4f4"></div>
<div class="a" style="left:53px;top:1025px;width:15px;height:15px;border:1px solid #c8c8c8;background:#f3f3f3"></div>
<div class="a" style="left:1869px;top:1025px;width:15px;height:15px;border:1px solid #c8c8c8;background:#f3f3f3"></div>
<svg class="a" style="left:0;top:0" width="1920" height="1080"><g fill="#333"><path d="M1890 223 H1897 L1893.5 219.5 Z"/><path d="M1890 1014 H1897 L1893.5 1017.5 Z"/><path d="M63.5 1029 V1036 L59.5 1032.5 Z"/><path d="M1875 1029 V1036 L1879 1032.5 Z"/></g></svg>
<div class="a" style="left:25px;top:1041px;width:1877px;height:1px;background:#a9a9a9"></div>
<div class="a" style="left:25px;top:1042px;width:1877px;height:24px;background:#f0f0f0"></div>
<div class="a" style="left:29px;top:1048px;font-size:11.2px;color:#444;white-space:nowrap">PAGE: 2 OF 2 &nbsp;244 WORDS</div>
<div class="a" style="left:1722px;top:1048px;font-size:11.5px;color:#444">90%</div>
<svg class="a" style="left:0;top:0" width="1920" height="1080"><rect x="1752" y="1051.5" width="8" height="2" fill="#444"/><rect x="1765" y="1051.5" width="116" height="1.3" fill="#9e9e9e"/><rect x="1814" y="1046" width="4.5" height="12" fill="#444"/><path d="M1886 1052.5 H1894 M1890 1048.5 V1056.5" stroke="#444" stroke-width="2"/></svg>
</body></html>
